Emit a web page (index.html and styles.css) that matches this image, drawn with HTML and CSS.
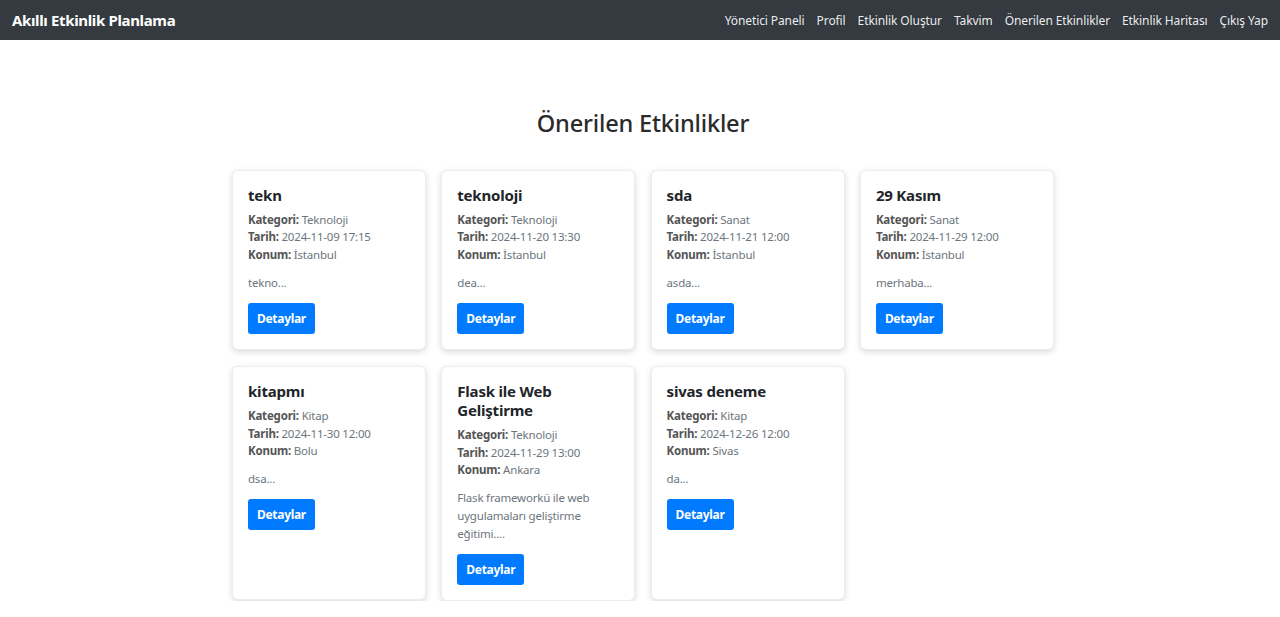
FILE: index.html
```html
<!DOCTYPE html>
<html lang="tr">
<head>
<meta charset="utf-8">
<title>Önerilen Etkinlikler</title>
<link rel="stylesheet" href="styles.css">
</head>
<body>
<nav class="navbar">
  <a class="brand" href="#">Akıllı Etkinlik Planlama</a>
  <ul class="nav-links">
    <li><a href="#">Yönetici Paneli</a></li>
    <li><a href="#">Profil</a></li>
    <li><a href="#">Etkinlik Oluştur</a></li>
    <li><a href="#">Takvim</a></li>
    <li><a href="#">Önerilen Etkinlikler</a></li>
    <li><a href="#">Etkinlik Haritası</a></li>
    <li><a href="#">Çıkış Yap</a></li>
  </ul>
</nav>
<main class="container">
  <h1 class="page-title">Önerilen Etkinlikler</h1>
  <div class="card-grid">
    <div class="card">
      <h5 class="card-title">tekn</h5>
      <p class="meta"><b>Kategori:</b> Teknoloji<br><b>Tarih:</b> 2024-11-09 17:15<br><b>Konum:</b> İstanbul</p>
      <p class="desc">tekno...</p>
      <a class="btn" href="#">Detaylar</a>
    </div>
    <div class="card">
      <h5 class="card-title">teknoloji</h5>
      <p class="meta"><b>Kategori:</b> Teknoloji<br><b>Tarih:</b> 2024-11-20 13:30<br><b>Konum:</b> İstanbul</p>
      <p class="desc">dea...</p>
      <a class="btn" href="#">Detaylar</a>
    </div>
    <div class="card">
      <h5 class="card-title">sda</h5>
      <p class="meta"><b>Kategori:</b> Sanat<br><b>Tarih:</b> 2024-11-21 12:00<br><b>Konum:</b> İstanbul</p>
      <p class="desc">asda...</p>
      <a class="btn" href="#">Detaylar</a>
    </div>
    <div class="card">
      <h5 class="card-title">29 Kasım</h5>
      <p class="meta"><b>Kategori:</b> Sanat<br><b>Tarih:</b> 2024-11-29 12:00<br><b>Konum:</b> İstanbul</p>
      <p class="desc">merhaba...</p>
      <a class="btn" href="#">Detaylar</a>
    </div>
    <div class="card">
      <h5 class="card-title">kitapmı</h5>
      <p class="meta"><b>Kategori:</b> Kitap<br><b>Tarih:</b> 2024-11-30 12:00<br><b>Konum:</b> Bolu</p>
      <p class="desc">dsa...</p>
      <a class="btn" href="#">Detaylar</a>
    </div>
    <div class="card">
      <h5 class="card-title">Flask ile Web Geliştirme</h5>
      <p class="meta"><b>Kategori:</b> Teknoloji<br><b>Tarih:</b> 2024-11-29 13:00<br><b>Konum:</b> Ankara</p>
      <p class="desc">Flask frameworkü ile web uygulamaları geliştirme eğitimi....</p>
      <a class="btn" href="#">Detaylar</a>
    </div>
    <div class="card">
      <h5 class="card-title">sivas deneme</h5>
      <p class="meta"><b>Kategori:</b> Kitap<br><b>Tarih:</b> 2024-12-26 12:00<br><b>Konum:</b> Sivas</p>
      <p class="desc">da...</p>
      <a class="btn" href="#">Detaylar</a>
    </div>
  </div>
</main>
</body>
</html>
```
FILE: styles.css
```css
* { box-sizing: border-box; }
body {
  margin: 0;
  font-family: "Noto Sans", "Open Sans", sans-serif;
  color: #212529;
  background: #fff;
}
a { text-decoration: none; }
.navbar {
  height: 40px;
  background: #343a40;
  display: flex;
  align-items: center;
  justify-content: space-between;
  padding: 0 6px 0 12px;
}
.brand {
  color: #fff;
  font-weight: 700;
  font-size: 15px;
  letter-spacing: -0.35px;
}
.nav-links {
  list-style: none;
  margin: 0;
  padding: 0;
  display: flex;
}
.nav-links a {
  display: block;
  padding: 0 6px;
  color: rgba(255,255,255,0.92);
  font-size: 12px;
  letter-spacing: -0.1px;
}
.container {
  width: 828px;
  margin: 0 auto;
  padding: 0 0 0 6px;
}
.page-title {
  margin: 68px 0 32px;
  text-align: center;
  font-size: 23.6px;
  font-weight: 500;
  line-height: 30px;
  color: #2b2b2b;
  letter-spacing: -0.2px;
}
.card-grid {
  display: grid;
  grid-template-columns: repeat(4, 194px);
  column-gap: 15.3px;
  row-gap: 16px;
  align-items: start;
}
.card {
  background: #fff;
  border: 1px solid rgba(0,0,0,0.07);
  border-radius: 6px;
  box-shadow: 0 2px 6px rgba(0,0,0,0.15);
  padding: 15px 15px 15px;
}
.card-grid .card:nth-child(n+5) { min-height: 234px; }
.card-title {
  margin: 0 0 6px;
  font-size: 15px;
  line-height: 19px;
  font-weight: 700;
  color: #212529;
  letter-spacing: -0.2px;
}
.meta {
  margin: 0 0 11px;
  font-size: 11.5px;
  line-height: 17.4px;
  color: #6c757d;
  letter-spacing: -0.2px;
}
.meta b { color: #555; font-weight: 700; }
.desc {
  margin: 0 0 11px;
  font-size: 11.5px;
  line-height: 18px;
  color: #6c757d;
  letter-spacing: -0.2px;
}
.btn {
  display: inline-block;
  background: #007bff;
  color: #fff;
  font-weight: 700;
  font-size: 12px;
  line-height: 31px;
  height: 31px;
  padding: 0 9px;
  border-radius: 3px;
  letter-spacing: -0.3px;
}
```
